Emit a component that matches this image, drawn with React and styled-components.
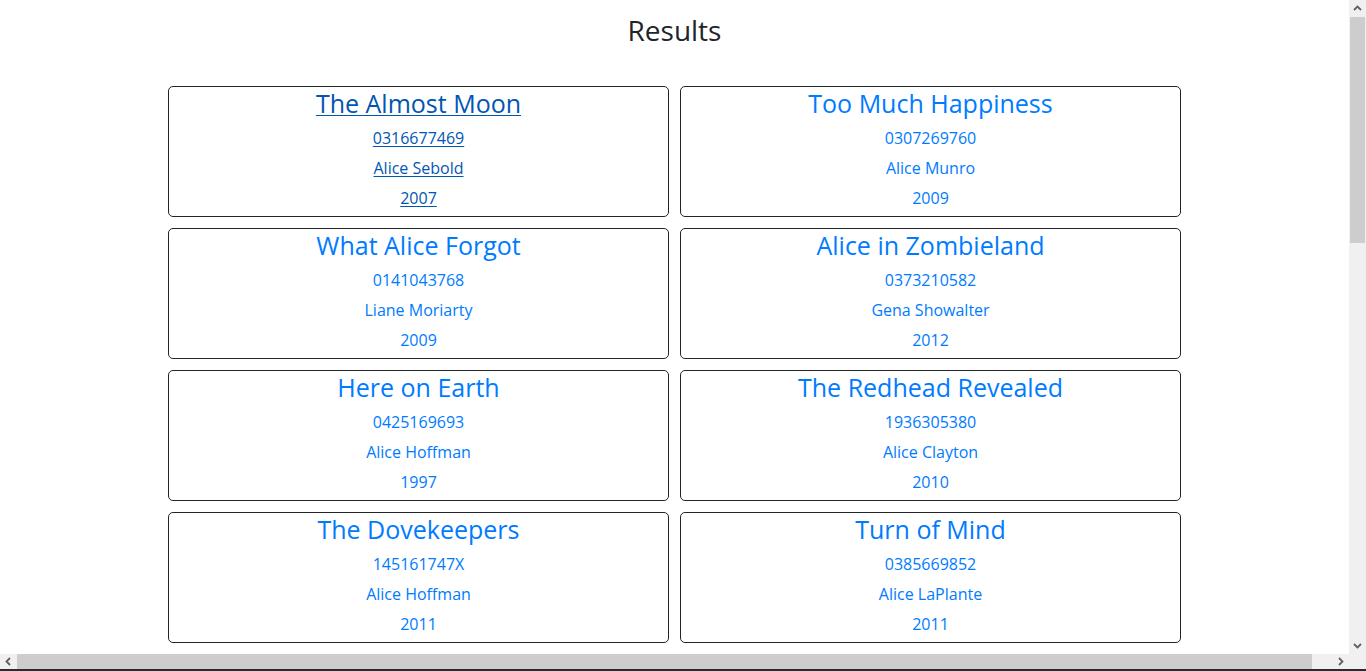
import React from "react";
import styled, { createGlobalStyle } from "styled-components";

const GlobalStyle = createGlobalStyle`
  html, body {
    margin: 0;
    padding: 0;
    background: #fff;
    overflow: hidden;
  }
  body {
    font-family: "Open Sans", "Noto Sans", "Liberation Sans", sans-serif;
    color: #212529;
  }
`;

/* window frame: page area + fake scrollbars */
const Frame = styled.div`
  display: flex;
  flex-direction: column;
  width: 1366px;
  height: 671px;
`;

const Top = styled.div`
  display: flex;
  height: 654px;
`;

const Page = styled.div`
  flex: 1;
  display: flex;
  flex-direction: column;
  align-items: center;
  overflow: hidden;
`;

const VBar = styled.div`
  width: 17px;
  background: #f0f0f0;
  display: flex;
  flex-direction: column;
  align-items: center;
`;

const VThumb = styled.div`
  width: 15px;
  height: 226px;
  background: #cdcdcd;
`;

const HBar = styled.div`
  display: flex;
  height: 15px;
  background: #f0f0f0;
`;

const HThumb = styled.div`
  width: 1295px;
  background: #cdcdcd;
`;

const ArrowBox = styled.div`
  width: ${(p) => p.$w || 17}px;
  height: ${(p) => p.$h || 17}px;
  display: flex;
  align-items: center;
  justify-content: center;
  flex-shrink: 0;
`;

const Spacer = styled.div`
  flex: 1;
`;

const Strip = styled.div`
  height: 2px;
  background: #2b2b2b;
`;

const Heading = styled.h3`
  margin: 10px 0 0;
  font-size: 28px;
  font-weight: 400;
  line-height: 40px;
  height: 76px;
  text-align: center;
`;

const Grid = styled.div`
  display: grid;
  grid-template-columns: 501px 501px;
  column-gap: 11px;
  row-gap: 11px;
`;

const Card = styled.a`
  display: flex;
  flex-direction: column;
  align-items: center;
  height: 129px;
  border: 1px solid #212529;
  border-radius: 5px;
  text-decoration: none;
  color: ${(p) => (p.$hover ? "#0056b3" : "#007bff")};

  span {
    text-decoration: ${(p) => (p.$hover ? "underline" : "none")};
    text-underline-offset: 2px;
    text-decoration-thickness: 1px;
  }
`;

const Title = styled.span`
  font-size: 25px;
  line-height: 33px;
  margin-bottom: 6px;
`;

const Line = styled.span`
  font-size: 16px;
  line-height: 24px;
  margin-bottom: 6px;
`;

const Chevron = ({ dir }) => {
  const pts = {
    up: "1,6 4.5,2.5 8,6",
    down: "1,3 4.5,6.5 8,3",
    left: "6,1 2.5,4.5 6,8",
    right: "3,1 6.5,4.5 3,8",
  }[dir];
  return (
    <svg width="9" height="9" viewBox="0 0 9 9">
      <polyline points={pts} fill="none" stroke="#606060" strokeWidth="1.8" />
    </svg>
  );
};

const books = [
  ["The Almost Moon", "0316677469", "Alice Sebold", "2007"],
  ["Too Much Happiness", "0307269760", "Alice Munro", "2009"],
  ["What Alice Forgot", "0141043768", "Liane Moriarty", "2009"],
  ["Alice in Zombieland", "0373210582", "Gena Showalter", "2012"],
  ["Here on Earth", "0425169693", "Alice Hoffman", "1997"],
  ["The Redhead Revealed", "1936305380", "Alice Clayton", "2010"],
  ["The Dovekeepers", "145161747X", "Alice Hoffman", "2011"],
  ["Turn of Mind", "0385669852", "Alice LaPlante", "2011"],
];

export default function App() {
  return (
    <>
      <GlobalStyle />
      <Frame>
        <Top>
          <Page>
            <Heading>Results</Heading>
            <Grid>
              {books.map(([title, isbn, author, year], i) => (
                <Card key={isbn} href="#" $hover={i === 0}>
                  <Title>{title}</Title>
                  <Line>{isbn}</Line>
                  <Line>{author}</Line>
                  <Line>{year}</Line>
                </Card>
              ))}
            </Grid>
          </Page>
          <VBar>
            <ArrowBox>
              <Chevron dir="up" />
            </ArrowBox>
            <VThumb />
            <Spacer />
            <ArrowBox>
              <Chevron dir="down" />
            </ArrowBox>
          </VBar>
        </Top>
        <HBar>
          <ArrowBox $h={15}>
            <Chevron dir="left" />
          </ArrowBox>
          <HThumb />
          <Spacer />
          <ArrowBox $h={15}>
            <Chevron dir="right" />
          </ArrowBox>
          <ArrowBox $h={15} />
        </HBar>
        <Strip />
      </Frame>
    </>
  );
}
